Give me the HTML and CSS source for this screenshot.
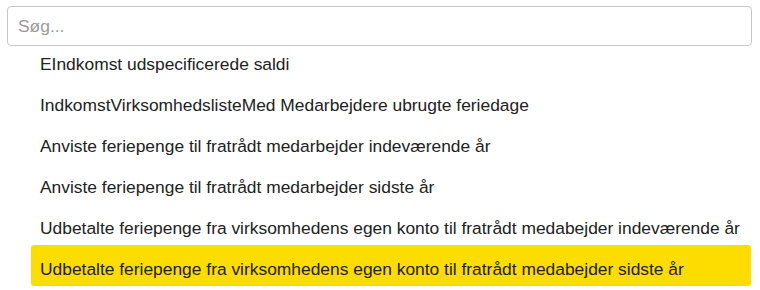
FILE: index.html
```html
<!DOCTYPE html>
<html lang="da">
<head>
    <meta charset="UTF-8">
    <meta name="viewport" content="width=device-width, initial-scale=1.0">
    <title>Søg</title>
    <link rel="stylesheet" href="styles.css">
</head>
<body>

    <div class="search">
        <input class="search-input" type="text" placeholder="Søg...">
        <ul class="results">
            <li>EIndkomst udspecificerede saldi</li>
            <li>IndkomstVirksomhedslisteMed Medarbejdere ubrugte feriedage</li>
            <li>Anviste feriepenge til fratrådt medarbejder indeværende år</li>
            <li>Anviste feriepenge til fratrådt medarbejder sidste år</li>
            <li>Udbetalte feriepenge fra virksomhedens egen konto til fratrådt medabejder indeværende år</li>
            <li class="active">Udbetalte feriepenge fra virksomhedens egen konto til fratrådt medabejder sidste år</li>
        </ul>
    </div>

</body>
</html>
```

FILE: styles.css
```css
body {
    margin: 0;
    font-family: "Liberation Sans", Arial, sans-serif;
    color: #222;
    background: #fff;
}
.search {
    padding: 6px 8px 0 7px;
}
.search-input {
    display: block;
    box-sizing: border-box;
    width: 100%;
    height: 40px;
    padding: 0 10px;
    font-family: inherit;
    font-size: 17.4px;
    color: #222;
    border: 1px solid #c8c8c8;
    border-radius: 4px;
    outline: none;
}
.search-input::placeholder {
    color: #9a9a9a;
}
.results {
    list-style: none;
    margin: -6px 1px 0 24px;
    padding: 0;
}
.results li {
    padding: 14px 9px 7px;
    font-size: 17.4px;
    line-height: 20px;
    border-radius: 3px;
    white-space: nowrap;
}
.results li.active {
    background: #fddc00;
}
```
